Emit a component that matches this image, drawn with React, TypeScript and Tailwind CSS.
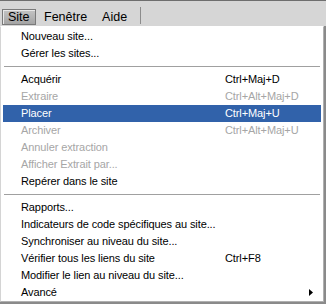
import { useState } from 'react';

type Item =
  | { sep: true }
  | { sep?: false; label: string; key?: string; disabled?: boolean; sub?: boolean };

const items: Item[] = [
  { label: 'Nouveau site...' },
  { label: 'Gérer les sites...' },
  { sep: true },
  { label: 'Acquérir', key: 'Ctrl+Maj+D' },
  { label: 'Extraire', key: 'Ctrl+Alt+Maj+D', disabled: true },
  { label: 'Placer', key: 'Ctrl+Maj+U' },
  { label: 'Archiver', key: 'Ctrl+Alt+Maj+U', disabled: true },
  { label: 'Annuler extraction', disabled: true },
  { label: 'Afficher Extrait par...', disabled: true },
  { label: 'Repérer dans le site' },
  { sep: true },
  { label: 'Rapports...' },
  { label: 'Indicateurs de code spécifiques au site...' },
  { label: 'Synchroniser au niveau du site...' },
  { label: 'Vérifier tous les liens du site', key: 'Ctrl+F8' },
  { label: 'Modifier le lien au niveau du site...' },
  { label: 'Avancé', sub: true },
];

function MenuRow({ item, active }: { item: Item; active: boolean }) {
  if (item.sep) {
    return (
      <div className="flex h-[9px] items-center px-[3px]">
        <div className="h-px w-full bg-[#a0a0a0]" />
      </div>
    );
  }
  // highlighted row => white text on blue
  const color = active
    ? 'bg-[#3162aa] text-white'
    : item.disabled
      ? 'text-[#a6a6a6]'
      : 'text-black';
  return (
    <div className={`relative mx-[2px] flex h-[17px] items-center whitespace-nowrap ${color}`}>
      <span className="pl-[18px]">{item.label}</span>
      {item.key && <span className="absolute left-[222px]">{item.key}</span>}
      {item.sub && (
        <svg
          className="absolute right-[8px] top-[5px]"
          width="4"
          height="7"
          viewBox="0 0 4 7"
        >
          <path d="M0 0 L4 3.5 L0 7 Z" fill="#000" />
        </svg>
      )}
    </div>
  );
}

export default function App() {
  const [active] = useState('Placer');
  return (
    <div
      className="h-[304px] w-[326px] overflow-hidden bg-white text-[11px] leading-none tracking-[-0.1px]"
      style={{ fontFamily: '"Liberation Sans", Arial, sans-serif' }}
    >
      <div className="flex h-[26px] items-end border-t border-[#6e6e6e] bg-[#d6d6d6] pb-px tracking-normal">
        <div className="ml-[2px] flex h-[16px] w-[34px] items-center border border-[#7a7a7a] bg-gradient-to-b from-[#c4c4c4] to-[#a4a4a4] pl-[5px] text-[12.5px] text-black shadow-[inset_1px_1px_0_#e8e8e8]">
          Site
        </div>
        <div className="flex h-[16px] items-center pl-[8px] text-[12.5px] text-black">
          Fenêtre
        </div>
        <div className="flex h-[16px] items-center pl-[15px] text-[12.5px] text-black">
          Aide
        </div>
        <div className="mb-[1px] ml-[13px] h-[17px] w-px bg-[#8c8c8c]" />
      </div>
      <div className="flex h-[278px] bg-[#8a8a8a] pb-[2px] pr-[2px]">
        <div className="h-full w-full border-b border-l border-r border-t border-b-[#b0b0b0] border-l-[#d4d4d4] border-r-[#b0b0b0] border-t-white bg-white pt-[1px]">
          {items.map((item, i) => (
            <MenuRow
              key={i}
              item={item}
              active={!item.sep && item.label === active}
            />
          ))}
        </div>
      </div>
    </div>
  );
}
